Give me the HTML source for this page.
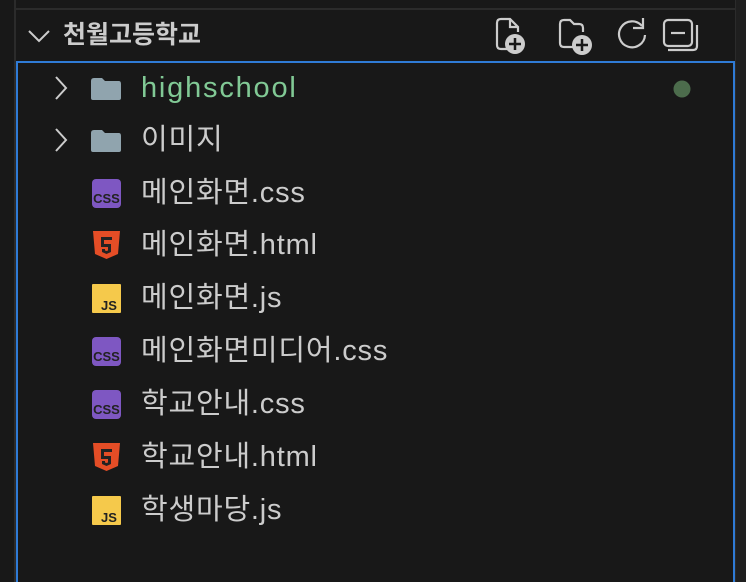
<!DOCTYPE html>
<html><head><meta charset="utf-8"><style>
html,body{margin:0;width:746px;height:582px;overflow:hidden}
body{background:#181818;position:relative;font-family:"Liberation Sans","Noto Sans CJK KR",sans-serif;}
.vl{position:absolute;left:14px;top:0;width:2px;height:582px;background:#2b2b2b}
.rl{position:absolute;left:735px;top:0;width:11px;height:582px;background:#1f1f1f;border-left:1px solid #2b2b2b}
.hl{position:absolute;left:16px;top:8px;width:719px;height:2px;background:#2b2b2b}
.hdr{position:absolute;left:63px;top:20px;font-size:25px;font-weight:bold;color:#cccccc;line-height:30px}
.box{position:absolute;left:16px;top:61px;width:715px;height:530px;border:2px solid #2f7bd6;border-bottom:none}
.row{position:absolute;left:0;height:52px;width:746px}
.row .t{position:absolute;left:141px;top:8px;font-size:29px;letter-spacing:0.8px;color:#cccccc;line-height:36px;white-space:nowrap}
.row svg{position:absolute}
</style></head><body>
<div class="vl"></div><div class="hl"></div><div class="rl"></div>
<svg style="position:absolute;left:27px;top:26px" width="24" height="20"><path d="M2 5 L12 15 L22 5" stroke="#ccc" stroke-width="2" fill="none"/></svg>
<div class="hdr">천월고등학교</div>
<svg style="position:absolute;left:490px;top:14px" width="220" height="42" fill="none" stroke="#cccccc" stroke-width="2.2">
<path d="M20 35 H11 Q7 35 7 31 V9 Q7 5 11 5 H20 L28 13 V18"/><path d="M20 5 V13 H28"/>
<circle cx="25" cy="30" r="10" fill="#ccc" stroke="none"/><path d="M25 24 V36 M19 30 H31" stroke="#181818" stroke-width="2.5"/>
<path d="M84 33 H74 Q70 33 70 29 V10 Q70 6 74 6 H80 L84 10 H89 Q93 10 93 14 V18"/>
<circle cx="92" cy="31" r="10" fill="#ccc" stroke="none"/><path d="M92 25 V37 M86 31 H98" stroke="#181818" stroke-width="2.5"/>
<path d="M152 12 A13 13 0 1 0 155 21"/><path d="M143 8 H153 V-2" transform="translate(0,6)"/>
<rect x="174" y="6" width="28" height="26" rx="4"/><path d="M181 19 H195"/><path d="M178 36 H203 Q207 36 207 32 V11"/>
</svg>
<div class="box"></div>

<div class="row" style="top:62px">
<svg style="left:53px;top:13px" width="16" height="26"><path d="M3 2 L13 13 L3 24" stroke="#ccc" stroke-width="2" fill="none"/></svg>
<svg style="left:89px;top:15px" width="34" height="24"><path d="M2 4 Q2 1 5 1 H13 L16 4 H30 Q32 4 32 7 V21 Q32 23 30 23 H4 Q2 23 2 21 Z" fill="#90a4ae"/></svg>
<div class="t" style="color:#81c995;letter-spacing:1.8px">highschool</div>
<svg style="left:673px;top:18px" width="18" height="18"><circle cx="9" cy="9" r="8.5" fill="#4c6c4c"/></svg>
</div>
<div class="row" style="top:114px">
<svg style="left:53px;top:13px" width="16" height="26"><path d="M3 2 L13 13 L3 24" stroke="#ccc" stroke-width="2" fill="none"/></svg>
<svg style="left:89px;top:15px" width="34" height="24"><path d="M2 4 Q2 1 5 1 H13 L16 4 H30 Q32 4 32 7 V21 Q32 23 30 23 H4 Q2 23 2 21 Z" fill="#90a4ae"/></svg>
<div class="t">이미지</div></div>

<div class="row" style="top:167px"><svg style="left:92px;top:12px" width="29" height="29"><rect width="29" height="29" rx="4" fill="#7e57c2"/><text x="14.5" y="24" font-size="13" font-weight="bold" text-anchor="middle" fill="#222" font-family="Liberation Sans">CSS</text></svg><div class="t">메인화면.css</div></div>
<div class="row" style="top:219px"><svg style="left:92px;top:11px" width="29" height="30"><path d="M1 1 H28 L26 24 L14.5 29 L3 24 Z" fill="#e44d26"/><path d="M9 7 H20 V10 H12 V14 H19 V22 L14.5 24 L10 22 V19 H13 V20.5 L14.5 21 L16 20.5 V17 H9 Z" fill="#222"/></svg><div class="t">메인화면.html</div></div>
<div class="row" style="top:272px"><svg style="left:92px;top:12px" width="29" height="29"><rect width="29" height="29" rx="1" fill="#f5c94b"/><text x="17" y="26" font-size="13" font-weight="bold" text-anchor="middle" fill="#222" font-family="Liberation Sans">JS</text></svg><div class="t">메인화면.js</div></div>
<div class="row" style="top:325px"><svg style="left:92px;top:12px" width="29" height="29"><rect width="29" height="29" rx="4" fill="#7e57c2"/><text x="14.5" y="24" font-size="13" font-weight="bold" text-anchor="middle" fill="#222" font-family="Liberation Sans">CSS</text></svg><div class="t">메인화면미디어.css</div></div>
<div class="row" style="top:378px"><svg style="left:92px;top:12px" width="29" height="29"><rect width="29" height="29" rx="4" fill="#7e57c2"/><text x="14.5" y="24" font-size="13" font-weight="bold" text-anchor="middle" fill="#222" font-family="Liberation Sans">CSS</text></svg><div class="t">학교안내.css</div></div>
<div class="row" style="top:431px"><svg style="left:92px;top:11px" width="29" height="30"><path d="M1 1 H28 L26 24 L14.5 29 L3 24 Z" fill="#e44d26"/><path d="M9 7 H20 V10 H12 V14 H19 V22 L14.5 24 L10 22 V19 H13 V20.5 L14.5 21 L16 20.5 V17 H9 Z" fill="#222"/></svg><div class="t">학교안내.html</div></div>
<div class="row" style="top:484px"><svg style="left:92px;top:12px" width="29" height="29"><rect width="29" height="29" rx="1" fill="#f5c94b"/><text x="17" y="26" font-size="13" font-weight="bold" text-anchor="middle" fill="#222" font-family="Liberation Sans">JS</text></svg><div class="t">학생마당.js</div></div>
</body></html>
